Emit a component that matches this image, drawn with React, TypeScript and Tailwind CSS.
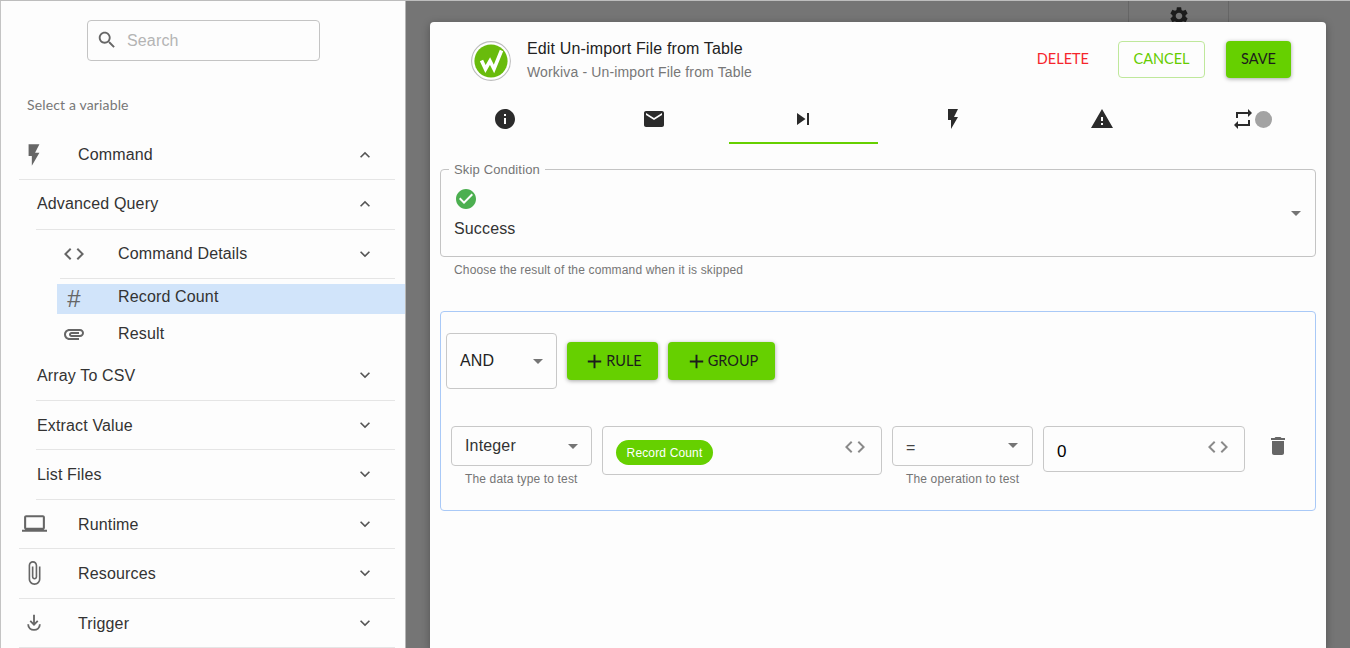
import type { ReactNode } from 'react';

const paths = {
  info: 'M12 2C6.48 2 2 6.48 2 12s4.48 10 10 10 10-4.48 10-10S17.52 2 12 2zm1 15h-2v-6h2v6zm0-8h-2V7h2v2z',
  email: 'M20 4H4c-1.1 0-1.99.9-1.99 2L2 18c0 1.1.9 2 2 2h16c1.1 0 2-.9 2-2V6c0-1.1-.9-2-2-2zm0 4l-8 5-8-5V6l8 5 8-5v2z',
  skip: 'M6 18l8.5-6L6 6v12zM16 6v12h2V6h-2z',
  flash: 'M7 2v11h3v9l7-12h-4l4-8z',
  warning: 'M1 21h22L12 2 1 21zm12-3h-2v-2h2v2zm0-4h-2v-4h2v4z',
  repeat: 'M7 7h10v3l4-4-4-4v3H5v6h2V7zm10 10H7v-3l-4 4 4 4v-3h12v-6h-2v4z',
  check: 'M12 2C6.48 2 2 6.48 2 12s4.48 10 10 10 10-4.48 10-10S17.52 2 12 2zm-2 15l-5-5 1.41-1.41L10 14.17l7.59-7.59L19 8l-9 9z',
  code: 'M9.4 16.6L4.8 12l4.6-4.6L8 6l-6 6 6 6 1.4-1.4zm5.2 0l4.6-4.6-4.6-4.6L16 6l6 6-6 6-1.4-1.4z',
  trash: 'M6 19c0 1.1.9 2 2 2h8c1.1 0 2-.9 2-2V7H6v12zM19 4h-3.5l-1-1h-5l-1 1H5v2h14V4z',
  search: 'M15.5 14h-.79l-.28-.27C15.41 12.59 16 11.11 16 9.5 16 5.91 13.09 3 9.5 3S3 5.91 3 9.5 5.91 16 9.5 16c1.61 0 3.09-.59 4.23-1.57l.27.28v.79l5 4.99L20.49 19l-4.99-5zm-6 0C7.01 14 5 11.99 5 9.5S7.01 5 9.5 5 14 7.01 14 9.5 11.99 14 9.5 14z',
  down: 'M7.41 8.59L12 13.17l4.59-4.58L18 10l-6 6-6-6 1.41-1.41z',
  up: 'M7.41 15.41L12 10.83l4.59 4.58L18 14l-6-6-6 6z',
  laptop: 'M20 18c1.1 0 1.99-.9 1.99-2L22 6c0-1.1-.9-2-2-2H4c-1.1 0-2 .9-2 2v10c0 1.1.9 2 2 2H0v2h24v-2h-4zM4 6h16v10H4V6z',
  clip: 'M16.5 6v11.5c0 2.21-1.79 4-4 4s-4-1.79-4-4V5c0-1.38 1.12-2.5 2.5-2.5s2.5 1.12 2.5 2.5v10.5c0 .55-.45 1-1 1s-1-.45-1-1V6H10v9.5c0 1.38 1.12 2.5 2.5 2.5s2.5-1.12 2.5-2.5V5c0-2.21-1.79-4-4-4S7 2.79 7 5v12.5c0 3.04 2.46 5.5 5.5 5.5s5.5-2.46 5.5-5.5V6h-1.5z',
  attach: 'M2 12.5C2 9.46 4.46 7 7.5 7H18c2.21 0 4 1.79 4 4s-1.79 4-4 4H9.5C8.12 15 7 13.88 7 12.5S8.12 10 9.5 10H17v2H9.41c-.55 0-.55 1 0 1H18c1.1 0 2-.9 2-2s-.9-2-2-2H7.5C5.57 9 4 10.57 4 12.5S5.57 16 7.5 16H17v2H7.5C4.46 18 2 15.54 2 12.5z',
  gear: 'M19.14 12.94c.04-.3.06-.61.06-.94 0-.32-.02-.64-.07-.94l2.03-1.58c.18-.14.23-.41.12-.61l-1.92-3.32c-.12-.22-.37-.29-.59-.22l-2.39.96c-.5-.38-1.03-.7-1.62-.94l-.36-2.54c-.04-.24-.24-.41-.48-.41h-3.84c-.24 0-.43.17-.47.41l-.36 2.54c-.59.24-1.13.57-1.62.94l-2.39-.96c-.22-.08-.47 0-.59.22L2.74 8.87c-.12.21-.08.47.12.61l2.03 1.58c-.05.3-.09.63-.09.94s.02.64.07.94l-2.03 1.58c-.18.14-.23.41-.12.61l1.92 3.32c.12.22.37.29.59.22l2.39-.96c.5.38 1.03.7 1.62.94l.36 2.54c.05.24.24.41.48.41h3.84c.24 0 .44-.17.47-.41l.36-2.54c.59-.24 1.13-.56 1.62-.94l2.39.96c.22.08.47 0 .59-.22l1.92-3.32c.12-.22.07-.47-.12-.61l-2.01-1.58zM12 15.6c-1.98 0-3.6-1.62-3.6-3.6s1.62-3.6 3.6-3.6 3.6 1.62 3.6 3.6-1.62 3.6-3.6 3.6z',
  plus: 'M19 13h-6v6h-2v-6H5v-2h6V5h2v6h6v2z',
};

function Icon({ d, className }: { d: string; className: string }) {
  return (
    <svg viewBox="0 0 24 24" fill="currentColor" className={className}>
      <path d={d} />
    </svg>
  );
}

function TriggerIcon() {
  return (
    <svg viewBox="0 0 24 24" fill="none" stroke="#666" strokeWidth="2.2" className="h-[20px] w-[20px]">
      <path d="M12 2v11M7.5 9.5 12 14l4.5-4.5" />
      <path d="M5 13.5c0 9 14 9 14 0" />
    </svg>
  );
}

function Chevron({ open }: { open?: boolean }) {
  return <Icon d={open ? paths.up : paths.down} className="ml-auto mr-[20px] h-5 w-5 shrink-0 text-[#555]" />;
}

function TopRow({ icon, label, open }: { icon: ReactNode; label: string; open?: boolean }) {
  return (
    <div className="ml-[18px] mr-[10px] flex h-[49.5px] items-center border-b border-[#e5e5e5]">
      <div className="mr-[29px] flex w-[30px] shrink-0 justify-center text-[#666]">{icon}</div>
      <span className={open ? '' : 'pt-[2px]'}>{label}</span>
      <Chevron open={open} />
    </div>
  );
}

function SubRow({ label, open }: { label: string; open?: boolean }) {
  return (
    <div className="ml-[35px] mr-[10px] flex h-[49.5px] items-center border-b border-[#e5e5e5] pl-[1px]">
      <span className={open ? '' : 'pt-[2px]'}>{label}</span>
      <Chevron open={open} />
    </div>
  );
}

function Sidebar() {
  return (
    <aside className="flex w-[406px] shrink-0 flex-col border-x border-l-[#c4c4c4] border-r-[#b5b5b5] bg-[#fdfdfd] text-[16px] text-[#333]">
      <div className="ml-[86px] mt-[19px] flex h-[41px] w-[233px] items-center rounded border border-[#c4c4c4] pl-[8px]">
        <Icon d={paths.search} className="h-[22px] w-[22px] text-[#666]" />
        <span className="ml-[9px] pt-[2px] text-[#b4b4b4]">Search</span>
      </div>
      <p className="ml-[26px] mt-[34px] h-[20px] font-['Lato',sans-serif] text-[14px] leading-[20px] text-[#777]">
        Select a variable
      </p>
      <div className="mt-[16px]">
        <TopRow label="Command" open icon={<Icon d={paths.flash} className="h-[26px] w-[26px]" />} />
        <SubRow label="Advanced Query" open />
        <div className="ml-[59px] mr-[10px] flex h-[49.5px] items-center border-b border-[#e5e5e5]">
          <div className="mr-[30px] flex w-[28px] shrink-0 justify-center text-[#666]">
            <Icon d={paths.code} className="h-6 w-6" />
          </div>
          <span>Command Details</span>
          <Chevron />
        </div>
        <div className="ml-[56px] mt-[5px] flex h-[30px] items-center bg-[#d1e4fa]">
          <div className="ml-[3px] mr-[30px] flex w-[28px] shrink-0 justify-center text-[24px] leading-[30px] text-[#666]">
            #
          </div>
          <span className="pb-[4px]">Record Count</span>
        </div>
        <div className="ml-[59px] flex h-[37px] items-center">
          <div className="mr-[30px] flex w-[28px] shrink-0 justify-center pt-[2px] text-[#666]">
            <Icon d={paths.attach} className="h-6 w-6" />
          </div>
          <span className="pt-[2px]">Result</span>
        </div>
        <SubRow label="Array To CSV" />
        <SubRow label="Extract Value" />
        <SubRow label="List Files" />
        <TopRow label="Runtime" icon={<Icon d={paths.laptop} className="h-[25px] w-[25px]" />} />
        <TopRow label="Resources" icon={<Icon d={paths.clip} className="h-[26px] w-[26px]" />} />
        <TopRow label="Trigger" icon={<TriggerIcon />} />
      </div>
    </aside>
  );
}

function Logo() {
  return (
    <svg viewBox="0 0 40 40" className="h-10 w-10 shrink-0">
      <circle cx="20" cy="20" r="19.4" fill="#fff" stroke="#bdbdbd" strokeWidth="1.1" />
      <circle cx="20" cy="20" r="16.6" fill="#69bb0c" />
      <path d="M10.5 19.5 14.5 28 19 20 23 28 30.5 9.5" fill="none" stroke="#fff" strokeWidth="3.6" />
    </svg>
  );
}

function Caret({ className }: { className: string }) {
  return <span className={`h-0 w-0 border-x-[5px] border-t-[5px] border-x-transparent border-t-[#757575] ${className}`} />;
}

function GreenButton({ label, width }: { label: string; width: string }) {
  return (
    <button
      type="button"
      className={`flex h-[38px] ${width} items-center justify-center rounded bg-[#66d000] font-['Lato',sans-serif] text-[14.5px] tracking-normal text-[#1c1c1c] shadow-[0_1px_4px_rgba(0,0,0,0.35)]`}
    >
      <Icon d={paths.plus} className="h-[23px] w-[23px]" />
      {label}
    </button>
  );
}

function Modal() {
  const tabs = [paths.info, paths.email, paths.skip, paths.flash, paths.warning];
  return (
    <section className="relative flex-1 rounded-t bg-[#fdfdfd] shadow-[0_2px_8px_rgba(0,0,0,0.3)]">
      <header className="flex h-[73px] items-start pt-[16px]">
        <div className="ml-[41px] flex items-center">
          <Logo />
          <div className="ml-[16px]">
            <h1 className="text-[16px] leading-[22px] text-[#222]">Edit Un-import File from Table</h1>
            <p className="mt-[1px] text-[14px] leading-[22px] text-[#777]">Workiva - Un-import File from Table</p>
          </div>
        </div>
        <div className="ml-auto mr-[35px] mt-[3px] flex items-center font-['Lato',sans-serif] text-[14.5px] tracking-normal">
          <span className="mb-[2px] mr-[29px] text-[#f6252c]">DELETE</span>
          <span className="flex h-[37px] w-[87px] items-center justify-center rounded border border-[#bfe89b] pb-[2px] text-[#66cc00]">
            CANCEL
          </span>
          <span className="ml-[21px] flex h-[37px] w-[65px] items-center justify-center rounded bg-[#66d000] pb-[2px] text-[#1c1c1c] shadow-[0_1px_4px_rgba(0,0,0,0.35)]">
            SAVE
          </span>
        </div>
      </header>

      <nav className="grid h-[49px] grid-cols-6 text-[#2b2b2b]">
        {tabs.map((d, i) => (
          <div
            key={d}
            className={`flex items-center justify-center ${i === 2 ? 'border-b-2 border-[#66d000] pt-[1px]' : 'pb-[1px]'}`}
          >
            <Icon d={d} className="h-6 w-6" />
          </div>
        ))}
        <div className="flex items-center justify-center pb-[1px]">
          <Icon d={paths.repeat} className="h-6 w-6" />
          <span className="h-[17px] w-[17px] rounded-full bg-[#a3a3a3]" />
        </div>
      </nav>

      <div className="mx-[10px] mt-[18px]">
        <fieldset className="relative h-[95px] rounded border border-[#c4c4c4] pl-[8px]">
          <legend className="px-[5px] text-[13px] leading-[15px] text-[#757575]">Skip Condition</legend>
          <Icon d={paths.check} className="ml-[5px] mt-[10px] h-6 w-6 text-[#4caf50]" />
          <p className="ml-[5px] mt-[8px] text-[16px] leading-[20px] text-[#333]">Success</p>
          <Caret className="absolute right-[14px] top-[34px]" />
        </fieldset>
        <p className="ml-[14px] mt-[6px] text-[12px] leading-[14px] text-[#757575]">
          Choose the result of the command when it is skipped
        </p>

        <div className="mt-[34px] h-[200px] rounded border border-[#a9c9f7] pl-[5px] pr-[10px]">
          <div className="mt-[21px] flex items-center">
            <div className="flex h-[56px] w-[111px] items-center justify-between rounded border border-[#c8c8c8] pl-[13px] pr-[13px] text-[16px] text-[#222]">
              AND
              <Caret className="" />
            </div>
            <div className="ml-[10px]">
              <GreenButton label="RULE" width="w-[91px]" />
            </div>
            <div className="ml-[10px]">
              <GreenButton label="GROUP" width="w-[107px]" />
            </div>
          </div>

          <div className="ml-[5px] mt-[37px] flex items-start">
            <div className="w-[141px]">
              <div className="flex h-[40px] items-center justify-between rounded border border-[#c8c8c8] pl-[13px] pr-[13px] text-[16px] text-[#333]">
                Integer
                <Caret className="" />
              </div>
              <p className="ml-[14px] mt-[6px] text-[12px] leading-[14px] text-[#757575]">The data type to test</p>
            </div>
            <div className="ml-[10px] flex h-[49px] w-[280px] items-start rounded border border-[#c8c8c8] pl-[13px] pr-[14px]">
              <span className="mt-[13px] flex h-[25px] w-[97px] items-center justify-center rounded-full bg-[#66d000] text-[12px] text-white">
                Record Count
              </span>
              <Icon d={paths.code} className="ml-auto mt-[8px] h-6 w-6 text-[#8a8a8a]" />
            </div>
            <div className="ml-[10px] w-[141px]">
              <div className="flex h-[40px] items-center justify-between rounded border border-[#c8c8c8] pl-[13px] pr-[14px] text-[16px] text-[#444]">
                <span className="pt-[3px]">=</span>
                <Caret className="mb-[2px]" />
              </div>
              <p className="ml-[14px] mt-[6px] text-[12px] leading-[14px] text-[#757575]">The operation to test</p>
            </div>
            <div className="ml-[10px] flex h-[46px] w-[202px] items-start rounded border border-[#c8c8c8] pl-[13px] pr-[14px]">
              <span className="mt-[15px] text-[17px] leading-[20px] text-black">0</span>
              <Icon d={paths.code} className="ml-auto mt-[8px] h-6 w-6 text-[#8a8a8a]" />
            </div>
            <Icon d={paths.trash} className="ml-[21px] mt-[8px] h-6 w-6 text-[#666]" />
          </div>
        </div>
      </div>
    </section>
  );
}

export default function App() {
  return (
    <div className="flex h-[648px] w-[1350px] overflow-hidden border-t border-[#bdbdbd] font-['Liberation_Sans',Arial,sans-serif] tracking-[0.15px]">
      <Sidebar />
      <main className="relative flex flex-1 bg-[#757575] pl-[24px] pr-[24px] pt-[21px]">
        {/* gear on the page behind the dialog */}
        <div className="absolute left-[722px] top-0 flex h-[22px] w-[101px] justify-center overflow-hidden border-x border-[#666]">
          <Icon d={paths.gear} className="mt-[4px] h-[22px] w-[22px] text-[#1c1c1c]" />
        </div>
        <Modal />
      </main>
    </div>
  );
}
